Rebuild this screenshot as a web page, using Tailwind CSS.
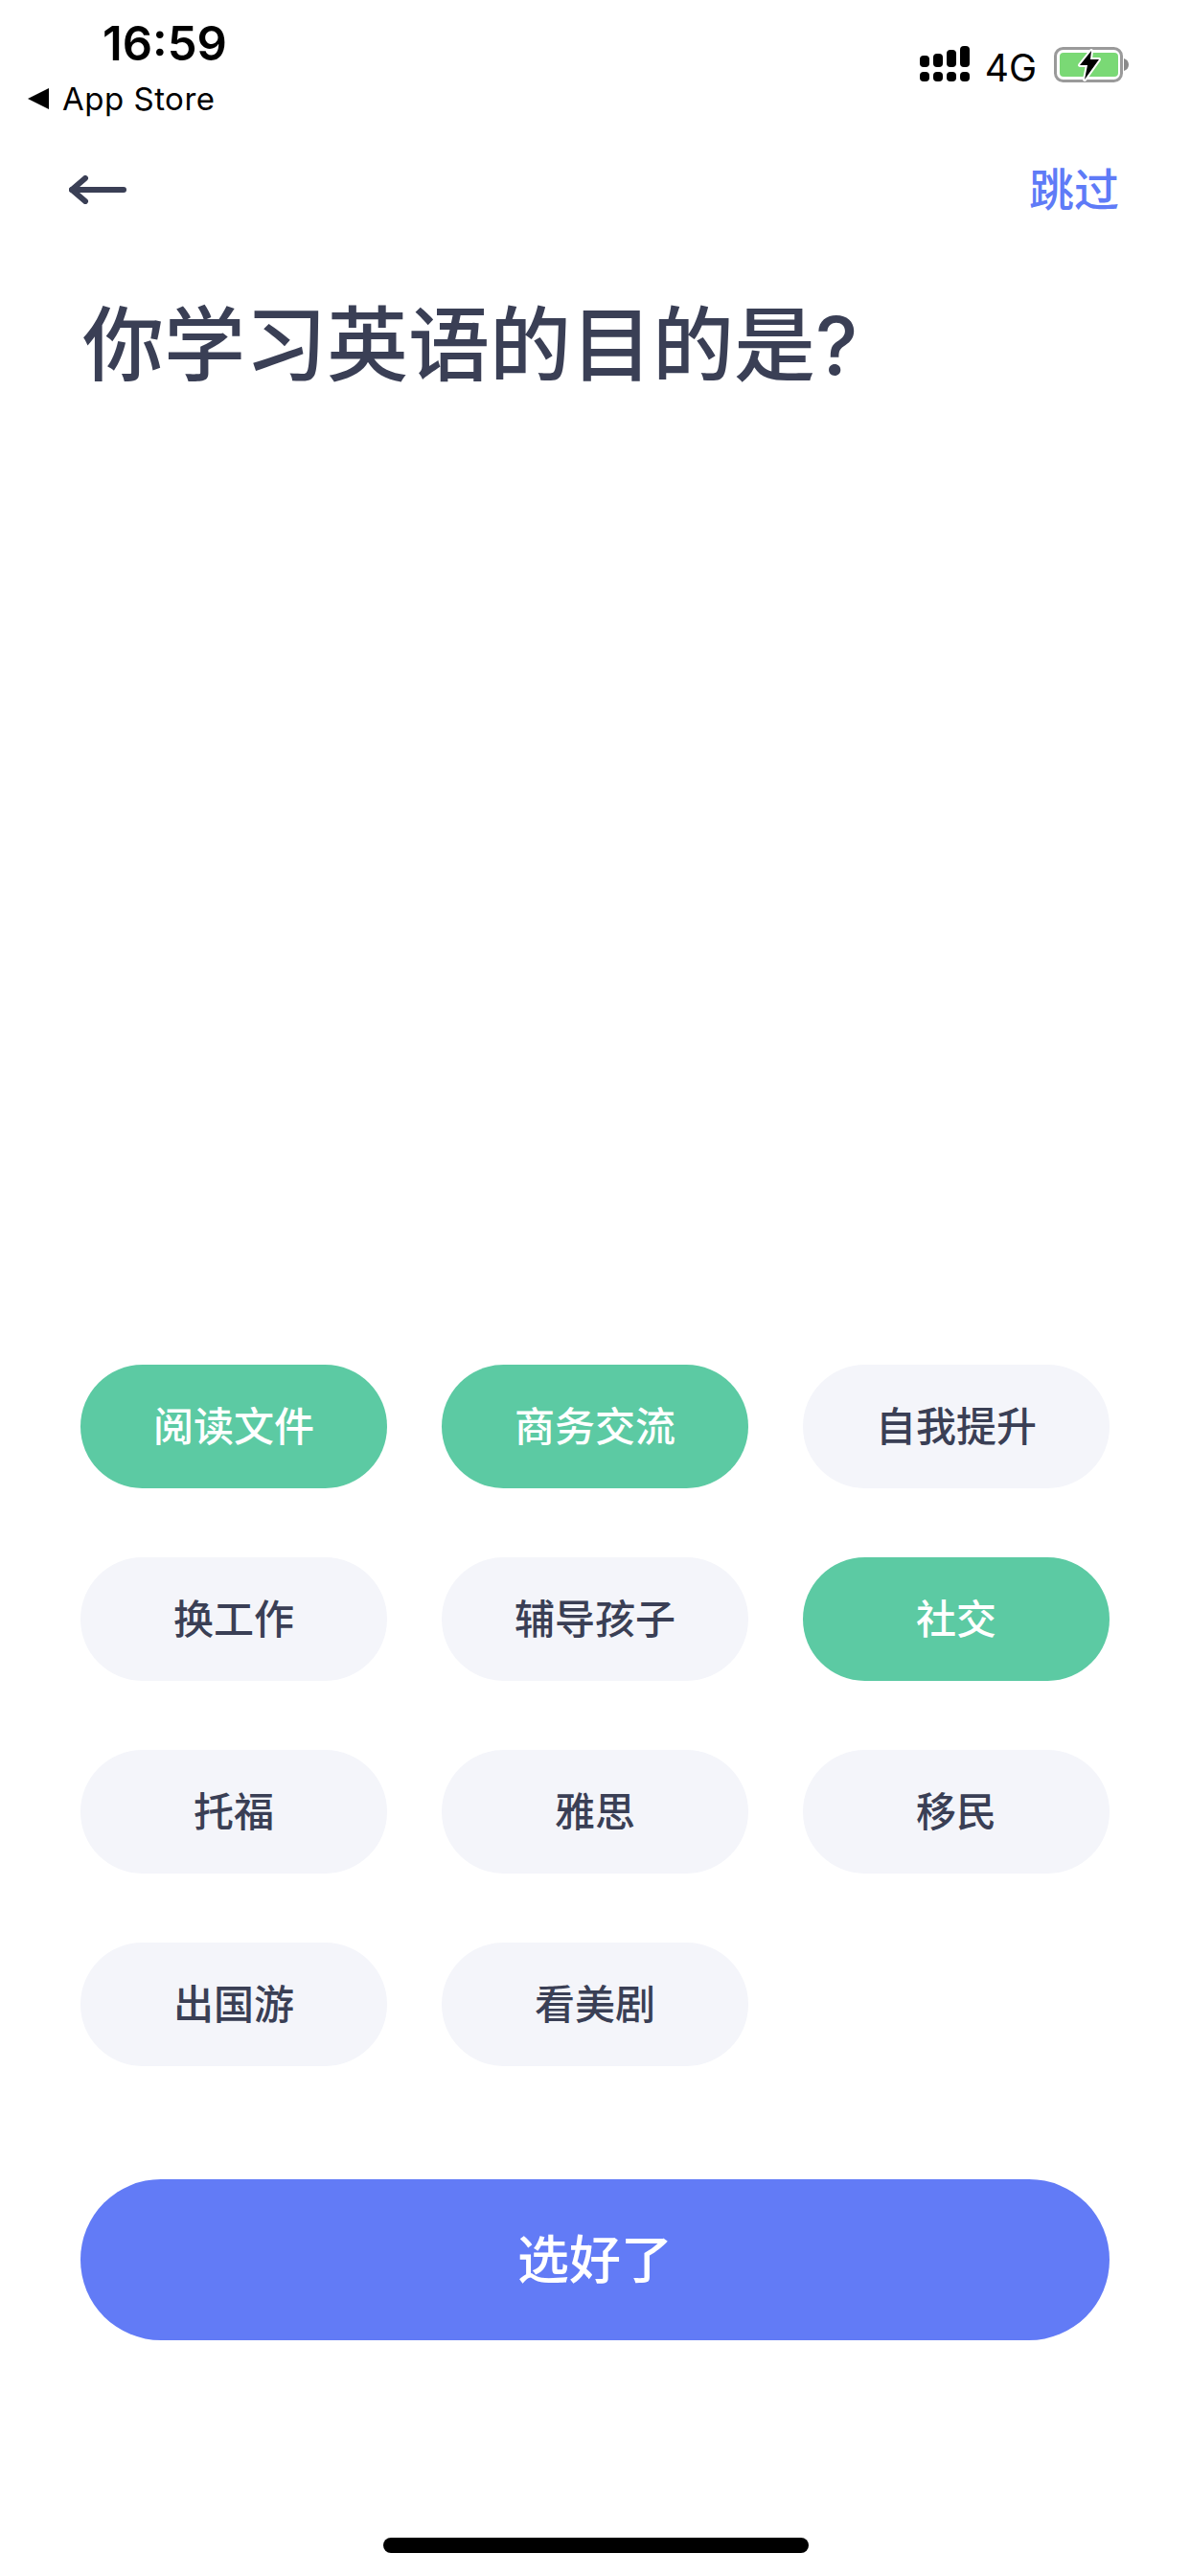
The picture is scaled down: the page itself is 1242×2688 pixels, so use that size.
<!DOCTYPE html>
<html lang="zh-CN">
<head>
    <meta charset="UTF-8">
    <title>学习目的</title>
    <script src="https://cdn.jsdelivr.net/npm/@tailwindcss/browser@4"></script>
</head>
<body class="bg-white">
    <div class="relative w-[1242px] h-[2688px] overflow-hidden bg-white font-['Inter','Noto_Sans_CJK_SC',sans-serif]">

        <!-- status bar -->
        <div class="flex justify-between h-[163px]">
            <div class="pl-[29px]">
                <div class="pl-[78px] pt-[16px] h-[84px] text-[49px] leading-[60px] font-semibold text-black">16:59</div>
                <div class="flex items-center h-[38px] text-[33px] leading-[34px] text-black tracking-[0.5px]">
                    <svg class="w-[22px] h-[24px] mr-[14px]" viewBox="0 0 22 24"><path d="M0 12 22 1V23Z" fill="#000"/></svg>
                    <span>App Store</span>
                </div>
            </div>
            <div class="flex items-start pt-[48px] pr-[62px]">
                <svg class="w-[52px] h-[38px]" viewBox="0 0 52 38" fill="#000">
                    <rect x="0" y="10" width="10" height="12" rx="4"/>
                    <rect x="14" y="8" width="10" height="14" rx="4"/>
                    <rect x="28" y="4" width="10" height="18" rx="4"/>
                    <rect x="42" y="0" width="10" height="22" rx="4"/>
                    <rect x="0" y="27" width="10" height="10" rx="4"/>
                    <rect x="14" y="27" width="10" height="10" rx="4"/>
                    <rect x="28" y="27" width="10" height="10" rx="4"/>
                    <rect x="42" y="27" width="10" height="10" rx="4"/>
                </svg>
                <span class="ml-[16px] text-[39px] leading-[46px] text-black">4G</span>
                <svg class="ml-[18px] w-[80px] h-[39px]" viewBox="0 0 80 39">
                    <rect x="1.500" y="2.500" width="69" height="34" rx="8" fill="none" stroke="#9a9a9a" stroke-width="3"/>
                    <rect x="6" y="7" width="61" height="25" rx="4" fill="#7ad975"/>
                    <path d="M73 13c3 1 5 3 5 6.500s-2 5.500-5 6.500Z" fill="#8a8a8a"/>
                    <path d="M39 5 27 20h8l-3 15 15-21h-9l1-9Z" fill="#000" stroke="#fff" stroke-width="4" stroke-linejoin="round" paint-order="stroke"/>
                </svg>
            </div>
        </div>

        <!-- nav -->
        <div class="flex items-center justify-between h-[70px] pl-[72px] pr-[74px]">
            <svg class="w-[60px] h-[30px]" viewBox="0 0 60 30" fill="none" stroke="#3a3f55" stroke-width="6" stroke-linecap="round" stroke-linejoin="round">
                <path d="M3 15H57"/>
                <path d="M17 3 3 15 17 27"/>
            </svg>
            <span class="text-[47px] leading-[60px] font-medium text-[#5f7bf7]">跳过</span>
        </div>

        <!-- title -->
        <h1 class="pl-[86px] pt-[68px] text-[85px] leading-[120px] font-medium text-[#3a3f55]">你学习英语的目的是<span class="text-[84px]">?</span></h1>

        <!-- options -->
        <div class="absolute left-[84px] top-[1424px] grid grid-cols-[320px_320px_320px] gap-x-[57px] gap-y-[72px] text-[42px]">
            <div class="h-[129px] rounded-full flex items-center justify-center bg-[#5ccaa3] text-white font-medium">阅读文件</div>
            <div class="h-[129px] rounded-full flex items-center justify-center bg-[#5ccaa3] text-white font-medium">商务交流</div>
            <div class="h-[129px] rounded-full flex items-center justify-center bg-[#f4f5fa] text-[#3a3f55] font-medium">自我提升</div>
            <div class="h-[129px] rounded-full flex items-center justify-center bg-[#f4f5fa] text-[#3a3f55] font-medium">换工作</div>
            <div class="h-[129px] rounded-full flex items-center justify-center bg-[#f4f5fa] text-[#3a3f55] font-medium">辅导孩子</div>
            <div class="h-[129px] rounded-full flex items-center justify-center bg-[#5ccaa3] text-white font-medium">社交</div>
            <div class="h-[129px] rounded-full flex items-center justify-center bg-[#f4f5fa] text-[#3a3f55] font-medium">托福</div>
            <div class="h-[129px] rounded-full flex items-center justify-center bg-[#f4f5fa] text-[#3a3f55] font-medium">雅思</div>
            <div class="h-[129px] rounded-full flex items-center justify-center bg-[#f4f5fa] text-[#3a3f55] font-medium">移民</div>
            <div class="h-[129px] rounded-full flex items-center justify-center bg-[#f4f5fa] text-[#3a3f55] font-medium">出国游</div>
            <div class="h-[129px] rounded-full flex items-center justify-center bg-[#f4f5fa] text-[#3a3f55] font-medium">看美剧</div>
        </div>

        <!-- submit -->
        <div class="absolute left-[84px] top-[2274px] w-[1074px] h-[168px] rounded-full bg-[#627bf6] flex items-center justify-center text-white text-[54px] font-medium">选好了</div>

        <!-- home indicator -->
        <div class="absolute left-[400px] top-[2648px] w-[444px] h-[16px] rounded-full bg-black"></div>
    </div>
</body>
</html>
